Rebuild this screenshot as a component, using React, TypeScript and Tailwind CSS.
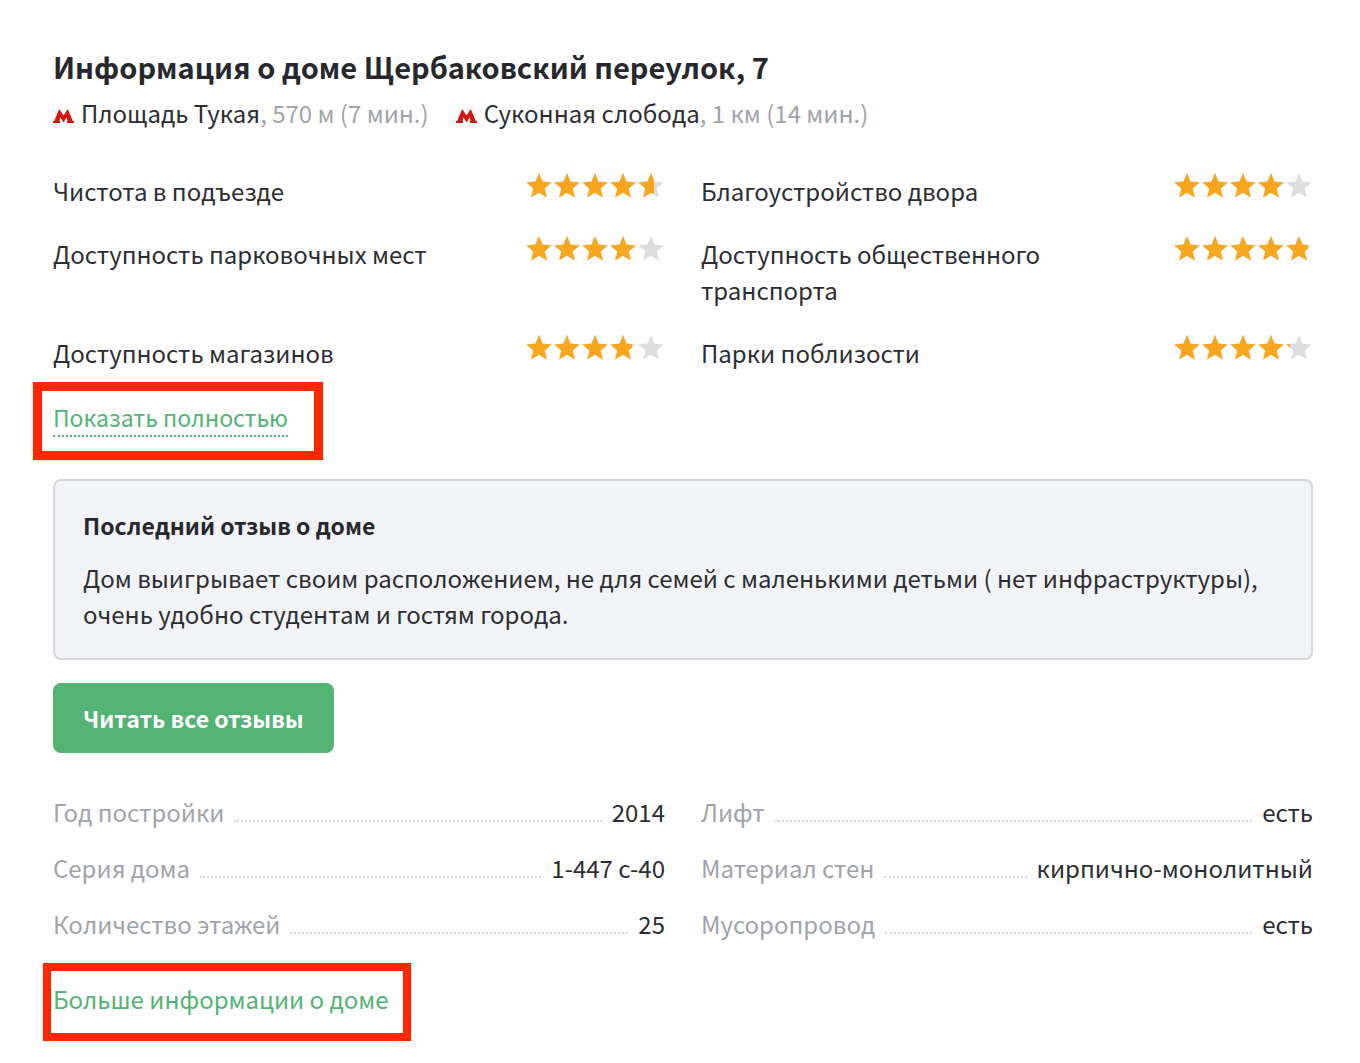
import React from "react";

const STAR = "M13 0L16.500 8.600L25.700 9.400L18.700 15.400L20.900 24.600L13 19.800L5.100 24.600L7.300 15.400L0.300 9.400L9.500 8.600Z";

function StarRow({ className }: { className: string }) {
  return (
    <svg viewBox="0 0 140 26" className={`h-[26px] w-[140px] ${className}`} aria-hidden="true">
      {[0, 1, 2, 3, 4].map((i) => (
        <path key={i} d={STAR} fill="currentColor" transform={`translate(${i * 28 + 1} 0)`} />
      ))}
    </svg>
  );
}

function Rating({ filled }: { filled: number }) {
  return (
    <span role="img" aria-label={`Оценка: ${(filled / 28).toFixed(1)} из 5`} className="relative block h-[26px] w-[140px] shrink-0">
      <StarRow className="text-[#dddde0]" />
      <span className="absolute top-0 left-0 h-[26px] overflow-hidden" style={{ width: filled }}>
        <StarRow className="max-w-none text-[#f9a61f]" />
      </span>
    </span>
  );
}

function MetroIcon() {
  return (
    <svg viewBox="0 0 21 14" className="mr-[7px] inline-block h-3.5 w-[21px]" fill="#d6150f" aria-hidden="true">
      <path d="M6.200 0L10.500 6.400L14.800 0L19.800 12H21V14H14V12H14.600L13.600 8.600L10.500 13.400L7.400 8.600L6.400 12H7V14H0V12H1.200Z" />
    </svg>
  );
}

const ratings = [
  { label: "Чистота в подъезде", filled: 129 },
  { label: "Благоустройство двора", filled: 112 },
  { label: "Доступность парковочных мест", filled: 112 },
  { label: "Доступность общественного транспорта", filled: 135 },
  { label: "Доступность магазинов", filled: 107 },
  { label: "Парки поблизости", filled: 117 },
];

const specs = [
  ["Год постройки", "2014"],
  ["Лифт", "есть"],
  ["Серия дома", "1-447 с-40"],
  ["Материал стен", "кирпично-монолитный"],
  ["Количество этажей", "25"],
  ["Мусоропровод", "есть"],
];

export default function App() {
  return (
    <main className="min-h-screen bg-white pt-[45px] pr-[47px] pb-5 pl-[53px] font-['Noto_Sans_CJK_SC','Noto_Sans',sans-serif] text-[24px] leading-[36px] text-[#2b2d33]">
      <h1 className="text-[29px] leading-[42px] font-bold text-[#26282d]">
        Информация о доме Щербаковский переулок, 7
      </h1>
      <div className="mt-2 flex flex-wrap gap-x-[27px]">
        <div>
          <MetroIcon />
          Площадь Тукая<span className="text-[#a0a3a9]">, 570 м (7 мин.)</span>
        </div>
        <div>
          <MetroIcon />
          Суконная слобода<span className="text-[#a0a3a9]">, 1 км (14 мин.)</span>
        </div>
      </div>

      <section className="mt-[42px] grid grid-cols-2 gap-x-9 gap-y-[27px]">
        {ratings.map((r) => (
          <div key={r.label} className="flex items-start justify-between gap-[90px]">
            <span>{r.label}</span>
            <Rating filled={r.filled} />
          </div>
        ))}
      </section>

      <div className="mt-7">
        <a
          href="#full"
          className="relative inline-block border-b-2 border-dotted border-[#52b374] text-[23px] text-[#52b374]"
        >
          Показать полностью
          <span className="pointer-events-none absolute -top-[17px] -right-[35px] -bottom-[25px] -left-5 border-[9px] border-[#ff2600] shadow-sm" />
        </a>
      </div>

      <section className="mt-[42px] rounded-lg border-2 border-[#d5d7da] bg-[#f2f3f6] px-7 py-[26px]">
        <h2 className="text-[23px] font-bold text-[#26282d]">Последний отзыв о доме</h2>
        <p className="mt-[17px]">
          Дом выигрывает своим расположением, не для семей с маленькими детьми ( нет инфраструктуры), очень удобно
          студентам и гостям города.
        </p>
      </section>

      <button
        type="button"
        className="mt-[23px] block h-[70px] rounded-lg bg-[#52b374] px-[30px] text-[23px] font-bold text-white"
      >
        Читать все отзывы
      </button>

      <dl className="mt-[41px] grid grid-cols-2 gap-x-9 gap-y-5">
        {specs.map(([name, value]) => (
          <div key={name} className="flex gap-2.5">
            <dt className="flex flex-1 gap-2.5 text-[#a0a3a9]">
              {name}
              <span className="mb-2 flex-1 border-b-2 border-dotted border-[#d8d9dc]" />
            </dt>
            <dd>{value}</dd>
          </div>
        ))}
      </dl>

      <div className="mt-[39px]">
        <a href="#more" className="relative inline-block text-[#52b374]">
          Больше информации о доме
          <span className="pointer-events-none absolute -top-[18px] -right-[22px] -bottom-6 -left-2.5 border-8 border-[#ff2600] shadow-sm" />
        </a>
      </div>
    </main>
  );
}
